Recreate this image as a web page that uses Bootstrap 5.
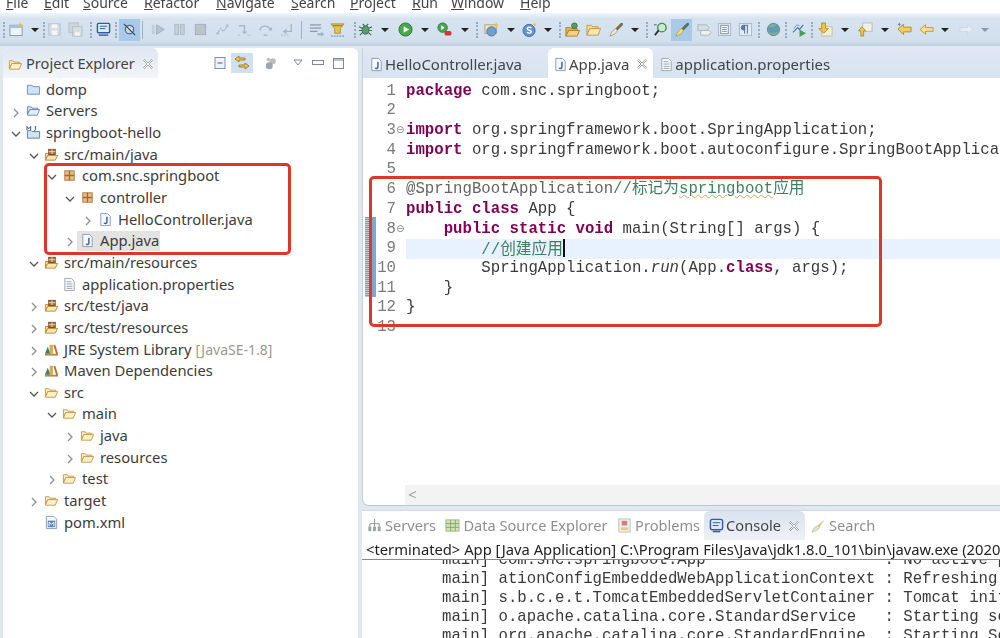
<!DOCTYPE html>
<html lang="en">
<head>
<meta charset="UTF-8">
<title>Eclipse</title>
<link href="https://cdn.jsdelivr.net/npm/bootstrap@5.3.0/dist/css/bootstrap.min.css" rel="stylesheet">
<style>
html, body { height: 638px; width: 1000px; overflow: hidden; }
body { background: #dfe7f1; font-family: "Noto Sans", "Noto Sans CJK SC", sans-serif; color: #333; position: relative; filter: blur(.35px); }
.menu-strip { height: 13px; background: #fff; overflow: hidden; font-size: 14px; line-height: 20px; color: #444; }
.menu-strip span { position: absolute; top: -7px; }
.menu-strip u { text-decoration-thickness: 1px; }
.tool-strip { height: 33px; background: linear-gradient(#f1f5f9 0, #d7e3f0 18%, #d2dfed 85%, #bfcfe1 100%); }
.tool-item { flex: none; height: 22px; display: flex; align-items: center; justify-content: center; }
.tool-on { background: #a9c9ea; }
.tool-sep { flex: none; width: 1px; height: 18px; background: #9fb2c8; }
.tool-drag { flex: none; width: 2px; height: 16px; border-left: 2px dotted #9aaabc; }
.drop-mark { flex: none; width: 0; height: 0; border-left: 4px solid transparent; border-right: 4px solid transparent; border-top: 4px solid #222; }
.drop-mark.off { border-top-color: #8b98a8; }
.work-area { height: 592px; padding-left: 3px; padding-top: 2px; }
.left-pane { width: 355px; background: #fff; border-radius: 6px 6px 0 0; }
.right-col { width: 638px; margin-left: 4px; }
.pane-head { height: 30px; }
.explorer-tab { width: 155px; height: 30px; padding: 2px 0 0 5px; background: linear-gradient(#dfe6f0, #f3f6fa); border-radius: 6px 6px 0 0; font-size: 14.6px; color: #444; }
.explorer-tab > svg:first-child { margin-right: 3px; }
.close-x { flex: none; margin-left: 8px; }
.head-tools { flex-grow: 1; }
.head-on { width: 22px; height: 20px; background: #cfe0f2; margin-left: 4px; }
.tree-list { padding-top: .5px; }
.tree-row { height: 21.65px; font-size: 14.75px; line-height: 21px; color: #3c3c3c; white-space: nowrap; }
.tree-row .chev { flex: none; width: 16px; }
.tree-row .node { flex: none; margin-right: 5px; }
.tree-body { align-items: center; height: 20px; }
.tree-sel { background: #e3e3e3; margin-left: -3px; padding-left: 3px; padding-right: 1px; }
.tree-dim { color: #9a9a8c; font-size: 14px; margin-left: 4px; }
.editor-pane { height: 458px; background: #fff; border-bottom: 1px solid #b9c6d6; border-left: 1px solid #c5d0de; border-radius: 0 0 0 7px; position: relative; }
.editor-tabs { height: 30px; background: linear-gradient(#dfe8f3, #d7e3f0); font-size: 15px; color: #444; }
.edit-tab { height: 30px; padding: 2px 0 0 6px; white-space: nowrap; }
.edit-tab svg:first-child { margin-right: 1px; }
.edit-tab.active { background: #fff; border-radius: 6px 6px 0 0; padding: 2px 6px 0 5px; margin-left: 26px; }
.edit-tab.active + .edit-tab { padding-left: 6px; }
.code-wrap { height: 407px; overflow: hidden; position: relative; padding-top: 3.5px; }
.code-line { height: 19.72px; line-height: 19.72px; font-family: "Liberation Mono", "Noto Sans CJK SC", monospace; font-size: 15.7px; white-space: pre; color: #3a3a3a; }
.line-no { flex: none; width: 33px; text-align: right; color: #7b7b7b; }
.fold-slot { flex: none; width: 10px; font-size: 10px; color: #7d8a9a; line-height: 17px; font-family: "DejaVu Sans", sans-serif; }
.line-text { flex-grow: 1; }
.line-cur { background: #e8f2fe; }
.kw { color: #7f0055; font-weight: bold; }
.cm { color: #3f7f5f; }
.an { color: #646464; }
.cjk { font-family: "Noto Sans CJK SC", sans-serif; font-size: 15.7px; line-height: 0; }
.spell { text-decoration: underline wavy #e0a03c 1px; }
.caret-bar { display: inline-block; width: 2px; height: 18px; background: #111; vertical-align: -3px; }
.change-bar { position: absolute; left: 2px; top: 139px; width: 11px; height: 80px; background: repeating-linear-gradient(#8e99a6 0 1px, #c3cad2 1px 2px); border-right: 5px solid #7ea8d2; }
.h-scroll { height: 20px; margin-left: 42px; background: #f3f3f3; color: #9aa0a6; font-size: 15px; line-height: 18px; padding-left: 3px; }
.console-pane { height: 128px; margin-top: 4px; background: #fff; border-top: 1px solid #d0d9e5; }
.console-tabs { height: 29px; font-size: 14.6px; color: #8f8f8f; white-space: nowrap; }
.ctab { height: 29px; padding-left: 9.5px; }
.ctab svg:first-child { margin-right: 3px; }
.ctab:first-child, .ctab.active { padding-left: 5px; }
.ctab.active + .ctab { padding-left: 6px; }
.ctab.active { background: linear-gradient(#d9e2ee, #eef2f7); border-radius: 6px 6px 0 0; color: #444; width: 101px; margin-left: 4px; }
.ctab.active svg:first-child { margin-right: 2px; }
.term-line { height: 20px; font-size: 14.75px; line-height: 19px; color: #222; white-space: nowrap; border-bottom: 1px solid #8a8a8a; padding-left: 4px; overflow: hidden; }
.console-body { height: 78px; overflow: hidden; }
.console-text { margin: -9px 0 0 80px; font-family: "Liberation Mono", monospace; font-size: 15.7px; line-height: 18.9px; color: #3a3a3a; overflow: visible; white-space: pre; }
.red-frame { position: absolute; border: 3px solid #e0352b; border-radius: 5px; pointer-events: none; }
.red-tree { left: 44px; top: 163px; width: 247px; height: 92px; }
.red-code { left: 369px; top: 176px; width: 513px; height: 151px; }
</style>
</head>
<body>

<svg width="0" height="0" class="position-absolute">
  <defs>
    <symbol id="x-close" viewBox="0 0 10 10"><path d="M1.500.5L5 4l3.500-3.500 1 1L6 5l3.500 3.500-1 1L5 6 1.500 9.500l-1-1L4 5 .5 1.500z" fill="#fff" stroke="#8d8d8d" stroke-width=".8"/></symbol>
    <symbol id="i-folder" viewBox="0 0 16 16"><path d="M1.500 4h4l1 1.500h6V7H4L1.500 12.500z" fill="#fbeec3" stroke="#c69a4c"/><path d="M4 7h10.500L12 13H1.500z" fill="#fdf1c9" stroke="#c69a4c"/></symbol>
    <symbol id="i-srcfolder" viewBox="0 0 16 16"><path d="M1.500 7h3l1 1h6v1H4l-2.500 5z" fill="#f6dc97" stroke="#b98c3d"/><path d="M4 9h10.500L12 14H1.500z" fill="#fbe7ae" stroke="#b98c3d"/><rect x="5" y="2.500" width="7" height="5.500" fill="#a9703a" stroke="#7b4d22"/><path d="M8.500 2.500v5M5 5h7" stroke="#f0d9b5"/></symbol>
    <symbol id="i-pkg" viewBox="0 0 16 16"><rect x="3" y="3" width="10" height="10" fill="#e8bd8c" stroke="#b0763c"/><path d="M8 3v10M3 8h10" stroke="#a5682f" stroke-width="1.400"/></symbol>
    <symbol id="i-java" viewBox="0 0 16 16"><path d="M3 1.500h7l3 3v10H3z" fill="#f7f9fc" stroke="#8b9bb0"/><path d="M9.500 5v6c0 1.500-2.500 1.500-3 .5" fill="none" stroke="#2f5f9e" stroke-width="1.500"/></symbol>
    <symbol id="i-page" viewBox="0 0 16 16"><path d="M3 1.500h7l3 3v10H3z" fill="#f6f7f9" stroke="#9aa5b3"/><path d="M5 5h5M5 7.500h6M5 10h6M5 12.200h6" stroke="#9aa5b3"/></symbol>
    <symbol id="i-lib" viewBox="0 0 16 16"><path d="M1 13.500h14" stroke="#b08a4a" stroke-width="2"/><path d="M1 12.500L4 5l3 7.500z" fill="#3f7f6f"/><rect x="6" y="3" width="3.500" height="9.500" fill="#d2aa52"/><path d="M10 3.500l2-.5 3 9.500-2 .5z" fill="#c26a3a"/></symbol>
    <symbol id="i-pom" viewBox="0 0 16 16"><path d="M2.500 1.500h8l3 3v10h-11z" fill="#f4f6fa" stroke="#8b9bb0"/><rect x="4" y="6" width="8" height="7" fill="#5c86b8"/><path d="M5.500 12V7.500L8 10l2.500-2.500V12" fill="none" stroke="#fff"/></symbol>
    <symbol id="i-blue" viewBox="0 0 16 16"><path d="M1.500 3.500h5l1 1.500h7v8h-13z" fill="#cfe3f7" stroke="#6a8fb8"/></symbol>
    <symbol id="i-servers" viewBox="0 0 16 16"><path d="M1.500 4h4l1 1.500h6V7H4L1.500 12z" fill="#cfe0f0" stroke="#6f8ba8"/><path d="M4 7h10.500L12 13H1.500z" fill="#e6eef6" stroke="#6f8ba8"/></symbol>
    <symbol id="i-project" viewBox="0 0 16 16"><path d="M1.500 6h4l1 1h8v7h-13z" fill="#d2e2f2" stroke="#5f7f9f"/><path d="M1 5.500V1.500l2 2.500 2-2.500v4" fill="none" stroke="#33506e"/><path d="M10 1v4c0 1-1 1-1.500 .5" fill="none" stroke="#33506e"/></symbol>
    <symbol id="t-new" viewBox="0 0 16 16"><rect x="1" y="3.500" width="13" height="11" fill="#eef3f8" stroke="#7e95ad"/><rect x="1" y="3.500" width="13" height="3" fill="#a9c3dd"/><path d="M12 .5l1 2 2 1-2 1-1 2-1-2-2-1 2-1z" fill="#e6c13f"/></symbol>
    <symbol id="t-save" viewBox="0 0 16 16"><rect x="2" y="2" width="12" height="12" fill="#d7dde4" stroke="#b4bec9"/><rect x="5" y="2.500" width="6" height="4" fill="#f4f6f8"/><rect x="5" y="9" width="6" height="5" fill="#f4f6f8"/></symbol>
    <symbol id="t-saveall" viewBox="0 0 16 16"><rect x="1" y="1" width="10" height="10" fill="#cfd6de" stroke="#b4bec9"/><rect x="5" y="5" width="10" height="10" fill="#d7dde4" stroke="#b4bec9"/><rect x="7.500" y="11" width="5" height="3.500" fill="#f4f6f8"/></symbol>
    <symbol id="t-mon" viewBox="0 0 16 16"><rect x="1.500" y="1.500" width="13" height="10" rx="1" fill="#dfeaf6" stroke="#2f5f9e" stroke-width="1.500"/><path d="M4 4.500h8M4 7h6" stroke="#2f5f9e"/><path d="M3 14h10" stroke="#2f5f9e" stroke-width="1.500"/></symbol>
    <symbol id="t-skip" viewBox="0 0 16 16"><circle cx="8" cy="8" r="4.500" fill="#cdd9e6" stroke="#3f6f9f" stroke-width="1.300"/><path d="M2 2l12 12" stroke="#444" stroke-width="1.300"/></symbol>
    <symbol id="t-resume" viewBox="0 0 16 16"><rect x="1" y="3" width="3" height="10" fill="#c4ccd6"/><path d="M6 3l8 5-8 5z" fill="#b6c4d2" stroke="#9dadbe"/></symbol>
    <symbol id="t-pause" viewBox="0 0 16 16"><rect x="3" y="2.500" width="4" height="11" fill="#c6cfd9" stroke="#aeb9c5"/><rect x="9" y="2.500" width="4" height="11" fill="#c6cfd9" stroke="#aeb9c5"/></symbol>
    <symbol id="t-stop" viewBox="0 0 16 16"><rect x="2.500" y="2.500" width="11" height="11" fill="#bcc3cb" stroke="#a4adb7"/></symbol>
    <symbol id="t-disc" viewBox="0 0 16 16"><path d="M2 13l4-6 3 3 5-7" fill="none" stroke="#a9b5c2" stroke-width="1.300" stroke-dasharray="2 1"/><circle cx="3" cy="12" r="1.500" fill="#b6c0cc"/><circle cx="13" cy="4" r="1.500" fill="#b6c0cc"/></symbol>
    <symbol id="t-into" viewBox="0 0 16 16"><path d="M2 4h6v6" fill="none" stroke="#aab6c3" stroke-width="1.500"/><path d="M5 10h6l-3 3z" fill="#aab6c3"/><path d="M1 14h3M11 14h4" stroke="#aab6c3" stroke-dasharray="2 1"/></symbol>
    <symbol id="t-over" viewBox="0 0 16 16"><path d="M2 9c1-6 9-6 11-1" fill="none" stroke="#aab6c3" stroke-width="1.500"/><path d="M11 9h4V5z" fill="#aab6c3"/><path d="M6 14h4" stroke="#aab6c3" stroke-width="1.500"/></symbol>
    <symbol id="t-ret" viewBox="0 0 16 16"><path d="M12 2v8H6" fill="none" stroke="#aab6c3" stroke-width="1.500"/><path d="M7 7l-4 3 4 3z" fill="#aab6c3"/><path d="M1 14h8" stroke="#aab6c3" stroke-dasharray="2 1"/></symbol>
    <symbol id="t-filter" viewBox="0 0 16 16"><path d="M1 3h12M1 6.500h12M1 10h8" stroke="#8e9aa8" stroke-width="1.300"/><path d="M9 12h4V10l3 3-3 3v-2H9z" fill="#9fb1c4"/></symbol>
    <symbol id="t-drop" viewBox="0 0 16 16"><path d="M1 2h14l-4 5v5H5V7z" fill="#e8c24e" stroke="#b68f2c"/><path d="M3 4h10" stroke="#5b7f3e"/><path d="M1 15h14" stroke="#5f86ad" stroke-dasharray="2 1"/></symbol>
    <symbol id="t-debug" viewBox="0 0 16 16"><ellipse cx="8" cy="8.500" rx="3.500" ry="4.500" fill="#5d9a6d" stroke="#3c6f4c"/><path d="M1 5l4 2M15 5l-4 2M1 9h3.500M15 9h-3.500M2 14l3-3M14 14l-3-3M5 2l2 2M11 2L9 4" stroke="#3c6f4c" stroke-width="1.200"/></symbol>
    <symbol id="t-run" viewBox="0 0 16 16"><circle cx="8" cy="8" r="7" fill="#4aa54e" stroke="#2d7a36"/><path d="M6 4.500l6 3.500-6 3.500z" fill="#f1f7ef"/></symbol>
    <symbol id="t-ext" viewBox="0 0 16 16"><circle cx="6" cy="6" r="5" fill="#4aa54e" stroke="#2d7a36"/><path d="M4.500 3.500l3.500 2.500-3.500 2.500z" fill="#fff"/><rect x="8" y="9.500" width="7.500" height="5" rx="2" fill="#d8323a"/></symbol>
    <symbol id="t-newj" viewBox="0 0 16 16"><rect x="1" y="3" width="12" height="9" fill="#f3e6c0" stroke="#b3a06a"/><circle cx="8" cy="10" r="5" fill="#6f9fcf" stroke="#4d7ba8"/><path d="M13 .5l1 1.500 1.500 1-1.500 1-1 1.500-1-1.500-1.500-1 1.500-1z" fill="#e6c13f"/></symbol>
    <symbol id="t-s" viewBox="0 0 16 16"><circle cx="7.500" cy="9" r="6.500" fill="#5f93cd" stroke="#3e70a8"/><path d="M10 6.500c-1-1.500-4.500-1.200-4.500.7 0 2 4.500 1.300 4.500 3.300 0 1.800-3.700 1.800-4.800.3" fill="none" stroke="#fff" stroke-width="1.500"/><path d="M13.500 .5l.7 1.500 1.500.7-1.500.7-.7 1.500-.7-1.500-1.500-.7 1.500-.7z" fill="#e6c13f"/></symbol>
    <symbol id="t-openp" viewBox="0 0 16 16"><path d="M1 6h5l1 1h6v2H4l-3 6z" fill="#e8b64f" stroke="#a97f2b"/><path d="M4 9h11.500L13 15H1z" fill="#f3d27d" stroke="#a97f2b"/><circle cx="10" cy="4" r="3" fill="#5f9a5f" stroke="#3f6f3f"/></symbol>
    <symbol id="t-open" viewBox="0 0 16 16"><path d="M1 3.500h5l1 1.500h6v2H4l-3 7z" fill="#f4dc9d" stroke="#c29a48"/><path d="M4 7h11.500L13 14H1z" fill="#f9e6b2" stroke="#c29a48"/></symbol>
    <symbol id="t-brush" viewBox="0 0 16 16"><path d="M14.500 1l-6 6 1.500 1.500 6-6z" fill="#8a6d3b" stroke="#6b5229"/><path d="M8 7l2 2c-1 3-4 5-8 6 1-3 3-6 6-8z" fill="#efe7d2" stroke="#a8a086"/></symbol>
    <symbol id="t-search" viewBox="0 0 16 16"><circle cx="9.500" cy="6" r="4.500" fill="#cfe8cf" stroke="#3f8f4f" stroke-width="1.500"/><path d="M6 9l-4 5" stroke="#333" stroke-width="2"/><path d="M1 3h3" stroke="#555"/></symbol>
    <symbol id="t-brushon" viewBox="0 0 16 16"><path d="M14.500 1l-6 6 1.500 1.500 6-6z" fill="#5f6f55" stroke="#4f5f45"/><path d="M8 7l2 2c-1 3-4 5-8 6 1-3 3-6 6-8z" fill="#f0dc7c" stroke="#c0a83c"/></symbol>
    <symbol id="t-mark" viewBox="0 0 16 16"><path d="M1 3h9l3 3-3 3H1z" fill="#d7dee6" stroke="#a9b4c0"/><path d="M4 9h9l2 2-2 3H4z" fill="#eef1f4" stroke="#a9b4c0"/></symbol>
    <symbol id="t-block" viewBox="0 0 16 16"><rect x="1.500" y="1.500" width="13" height="13" fill="#e4eaf1" stroke="#a9b8c8"/><rect x="4" y="3.500" width="8" height="9" fill="#fbfcfd" stroke="#7f8fa0"/><path d="M5.500 6h5M5.500 8h5M5.500 10h5" stroke="#7f8fa0"/></symbol>
    <symbol id="t-para" viewBox="0 0 16 16"><rect x="1.500" y="1.500" width="13" height="13" fill="#e4eaf1" stroke="#a9b8c8"/><path d="M7 3.500H6a2.500 2.500 0 000 5h1zM7 3.500v9M10 3.500v9M7 3.500h4" fill="#5f7f9f" stroke="#4f6f8f"/></symbol>
    <symbol id="t-globe" viewBox="0 0 16 16"><circle cx="8" cy="8" r="6.500" fill="#86b08a" stroke="#5b7f92"/><path d="M2 6c3-2 5 1 7-1s2-3 2-3c3 2 3 6 2 8-3 2-8 2-10 0z" fill="#5f9ab8"/></symbol>
    <symbol id="t-sync" viewBox="0 0 16 16"><path d="M1 11l5-5 2 2 4-5" fill="none" stroke="#5279a8" stroke-width="1.300"/><path d="M8 8l7 4-7 4z" fill="#45a050"/><path d="M2 7l3-4 3 1" fill="none" stroke="#7a9ac0"/></symbol>
    <symbol id="t-down" viewBox="0 0 16 16"><rect x="4" y="5" width="11" height="10" fill="#f3eedb" stroke="#c4bda0"/><path d="M4 1h4v6h3l-5 5-5-5h3z" fill="#f0c64a" stroke="#b88f22"/></symbol>
    <symbol id="t-up" viewBox="0 0 16 16"><rect x="5" y="1" width="10" height="9" fill="#eef0e6" stroke="#c4bda0"/><path d="M4 5L.5 9.500H3V15h3V9.500h2.500z" fill="#f0c64a" stroke="#b88f22"/></symbol>
    <symbol id="t-backs" viewBox="0 0 16 16"><path d="M1 7.500l6-5v3h8v5H7v3z" fill="#f2cf62" stroke="#b88f22"/><path d="M2.500 .5l.7 1.300 1.300.7-1.300.7-.7 1.300-.7-1.300-1.300-.7 1.300-.7z" fill="#5f86ad"/></symbol>
    <symbol id="t-back" viewBox="0 0 16 16"><path d="M1 8l6-5v3h8v4H7v3z" fill="#f7dd92" stroke="#c09a3a"/></symbol>
    <symbol id="t-fwd" viewBox="0 0 16 16"><path d="M15 8l-6-5v3H1v4h8v3z" fill="#e6edf5" stroke="#ccd6e2"/></symbol>
    <symbol id="h-collapse" viewBox="0 0 14 14"><rect x="2" y="1.500" width="10" height="11" fill="#eef3f8" stroke="#7e95ad"/><path d="M4.500 7h5" stroke="#556"/></symbol>
    <symbol id="h-link" viewBox="0 0 16 16"><path d="M1 4l4-3v2h6v2H5v2zM15 11l-4-3v2H5v2h6v2z" fill="#eec651" stroke="#a5822a"/></symbol>
    <symbol id="h-sync" viewBox="0 0 16 16"><circle cx="10" cy="6" r="3.500" fill="#b9bec5"/><circle cx="6" cy="11" r="4" fill="#9ea5ad"/><circle cx="5" cy="4" r="2" fill="#b9bec5"/></symbol>
    <symbol id="c-srv" viewBox="0 0 16 16"><path d="M8 1v5M3 6h10M3 6v3M13 6v3M8 6v3" stroke="#7f9a8a" fill="none"/><rect x="1.500" y="9" width="3" height="5" fill="#94a69a"/><rect x="6.500" y="9" width="3" height="5" fill="#94a69a"/><rect x="11.500" y="9" width="3" height="5" fill="#94a69a"/></symbol>
    <symbol id="c-ds" viewBox="0 0 16 16"><rect x="1" y="2" width="14" height="12" fill="#cfe3b8" stroke="#a3b982"/><path d="M1 6h14M1 10h14M6 2v12M11 2v12" stroke="#8aa36a"/></symbol>
    <symbol id="c-prob" viewBox="0 0 16 16"><rect x="2" y="1" width="12" height="14" fill="#eef0f2" stroke="#b8bec6"/><rect x="5" y="3" width="6" height="5" fill="#e27c72"/><rect x="4" y="10" width="8" height="3" fill="#e8cd7e"/></symbol>
    <symbol id="c-con" viewBox="0 0 16 16"><rect x="1.500" y="1.500" width="13" height="11" rx="2" fill="#dce8f5" stroke="#2f5f9e" stroke-width="1.500"/><path d="M4 5h8M4 8h6" stroke="#2f5f9e"/><path d="M4 14.500h8" stroke="#2f5f9e" stroke-width="1.500"/></symbol>
    <symbol id="c-srch" viewBox="0 0 16 16"><path d="M15 1l-8 7 2 2z" fill="#dcc98a"/><path d="M7 8l2 2c-1 3-4 4-8 5 1-3 3-6 6-7z" fill="#dfe6cf" stroke="#c2cba8"/></symbol>
  </defs>
</svg>

<div class="menu-strip" id="menuStrip"></div>
<div class="tool-strip d-flex align-items-center" id="toolStrip"></div>

<div class="work-area d-flex">
  <div class="left-pane overflow-hidden">
    <div class="pane-head d-flex">
      <div class="explorer-tab d-flex align-items-center">
        <svg width="15" height="15"><use href="#i-folder"/></svg>Project Explorer<svg class="close-x" width="10" height="10"><use href="#x-close"/></svg>
      </div>
      <div class="head-tools d-flex align-items-center" id="headTools"></div>
    </div>
    <div class="tree-list" id="treeList"></div>
  </div>

  <div class="right-col d-flex flex-column">
    <div class="editor-pane">
      <div class="editor-tabs d-flex align-items-stretch">
        <div class="edit-tab d-flex align-items-center"><svg width="15" height="15"><use href="#i-java"/></svg>HelloController.java</div>
        <div class="edit-tab active d-flex align-items-center"><svg width="15" height="15"><use href="#i-java"/></svg>App.java<svg class="close-x" width="10" height="10"><use href="#x-close"/></svg></div>
        <div class="edit-tab d-flex align-items-center"><svg width="15" height="15"><use href="#i-page"/></svg>application.properties</div>
      </div>
      <div class="code-wrap" id="codeWrap">
        <div class="change-bar"></div>
      </div>
      <div class="h-scroll">&lt;</div>
    </div>
    <div class="console-pane">
      <div class="console-tabs d-flex align-items-center">
        <div class="ctab d-flex align-items-center"><svg width="15" height="15"><use href="#c-srv"/></svg>Servers</div>
        <div class="ctab d-flex align-items-center"><svg width="15" height="15"><use href="#c-ds"/></svg>Data Source Explorer</div>
        <div class="ctab d-flex align-items-center"><svg width="15" height="15"><use href="#c-prob"/></svg>Problems</div>
        <div class="ctab active d-flex align-items-center"><svg width="15" height="15"><use href="#c-con"/></svg>Console<svg class="close-x" width="10" height="10"><use href="#x-close"/></svg></div>
        <div class="ctab d-flex align-items-center"><svg width="15" height="15"><use href="#c-srch"/></svg>Search</div>
      </div>
      <div class="term-line">&lt;terminated&gt; App [Java Application] C:\Program Files\Java\jdk1.8.0_101\bin\javaw.exe (2020</div>
      <div class="console-body"><pre class="console-text">main] com.snc.springboot.App                   : No active profile set
main] ationConfigEmbeddedWebApplicationContext : Refreshing
main] s.b.c.e.t.TomcatEmbeddedServletContainer : Tomcat initialized
main] o.apache.catalina.core.StandardService   : Starting service
main] org.apache.catalina.core.StandardEngine  : Starting Servlet</pre></div>
    </div>
  </div>
</div>

<div class="red-frame red-tree"></div>
<div class="red-frame red-code"></div>

<script>
  // menu: clipped at the top of the shot
  const menus = [['F','ile',6],['E','dit',44],['S','ource',83],['R','efactor',144],['N','avigate',216],['S','earch',291],['P','roject',350],['R','un',412],['W','indow',451],['H','elp',520]];
  const menuStrip = document.getElementById('menuStrip');
  menus.forEach(m => {
    let s = document.createElement('span');
    s.innerHTML = '<u>' + m[0] + '</u>' + m[1];
    s.style.left = m[2] + 'px';
    menuStrip.appendChild(s);
  });

  // toolbar: [kind, x, width]
  const tools = [
    ['drag',3],['t-new',9],['v',31],['drag',43],['t-save',47],['t-saveall',68],['drag',90],['t-mon',96],['drag',115],['on:t-skip',119,21],['sep',142],
    ['t-resume',151],['t-pause',172],['t-stop',193],['t-disc',215],['t-into',237],['t-over',258],['t-ret',280],['sep',301],
    ['t-filter',309],['t-drop',330],['drag',354],['t-debug',358],['v',381],['t-run',398],['v',421],['t-ext',437],['v',461],['drag',476],
    ['t-newj',484],['v',507],['t-s',522],['v',544],['drag',559],['t-openp',565],['t-open',586],['t-brush',608],['v',631],['drag',646],
    ['t-search',653],['on:t-brushon',671,21],['t-mark',697],['t-block',717],['t-para',738],['drag',758],['t-globe',766],['drag',785],
    ['t-sync',792],['drag',811],['t-down',818],['v',841],['t-up',858],['v',881],['t-backs',897],['t-back',919],['v',941],['t-fwd',959],['x',981]
  ];
  const toolStrip = document.getElementById('toolStrip');
  let cur = 0;
  tools.forEach(t => {
    let el = document.createElement('div');
    let w = 15;
    if (t[0] == 'drag') { el.className = 'tool-drag'; w = 2; }
    else if (t[0] == 'sep') { el.className = 'tool-sep'; w = 1; }
    else if (t[0] == 'v' || t[0] == 'x') { el.className = 'drop-mark' + (t[0] == 'x' ? ' off' : ''); w = 8; }
    else {
      let on = t[0].startsWith('on:');
      let id = on ? t[0].slice(3) : t[0];
      w = t[2] || 15;
      el.className = 'tool-item' + (on ? ' tool-on' : '');
      el.style.width = w + 'px';
      el.innerHTML = '<svg width="15" height="15"><use href="#' + id + '"/></svg>';
    }
    el.style.marginLeft = (t[1] - cur) + 'px';
    cur = t[1] + w;
    toolStrip.appendChild(el);
  });

  const head = document.getElementById('headTools');
  head.innerHTML = `
    <svg width="14" height="14" class="ms-auto"><use href="#h-collapse"/></svg>
    <div class="head-on d-flex align-items-center justify-content-center"><svg width="16" height="16"><use href="#h-link"/></svg></div>
    <svg width="14" height="14" style="margin-left:11px"><use href="#h-sync"/></svg>
    <svg width="10" height="8" style="margin-left:15px"><path d="M1 1h8L5 6z" fill="#fff" stroke="#7d8a99"/></svg>
    <svg width="12" height="6" style="margin-left:9px"><rect x="0.500" y="0.500" width="11" height="4" fill="#fff" stroke="#7d8a99"/></svg>
    <svg width="11" height="11" style="margin-left:9px;margin-right:14px"><rect x="0.500" y="0.500" width="10" height="10" fill="#fff" stroke="#7d8a99"/><path d="M0 2h11" stroke="#7d8a99"/></svg>`;

  // [level, chevron, icon, label, decoration]
  const tree = [
    [0,'','i-blue','domp'],
    [0,'r','i-servers','Servers'],
    [0,'d','i-project','springboot-hello'],
    [1,'d','i-srcfolder','src/main/java'],
    [2,'d','i-pkg','com.snc.springboot'],
    [3,'d','i-pkg','controller'],
    [4,'r','i-java','HelloController.java'],
    [3,'r','i-java','App.java','sel'],
    [1,'d','i-srcfolder','src/main/resources'],
    [2,'','i-page','application.properties'],
    [1,'r','i-srcfolder','src/test/java'],
    [1,'r','i-srcfolder','src/test/resources'],
    [1,'r','i-lib','JRE System Library','[JavaSE-1.8]'],
    [1,'r','i-lib','Maven Dependencies'],
    [1,'d','i-folder','src'],
    [2,'d','i-folder','main'],
    [3,'r','i-folder','java'],
    [3,'r','i-folder','resources'],
    [2,'r','i-folder','test'],
    [1,'r','i-folder','target'],
    [1,'','i-pom','pom.xml']
  ];
  const chevs = {
    r: '<svg width="12" height="12"><path d="M4 2l4 4-4 4" fill="none" stroke="#8f8f8f" stroke-width="1.300"/></svg>',
    d: '<svg width="12" height="12"><path d="M2 4l4 4 4-4" fill="none" stroke="#555" stroke-width="1.300"/></svg>',
    '': ''
  };
  const treeList = document.getElementById('treeList');
  tree.forEach(n => {
    let row = document.createElement('div');
    row.className = 'tree-row d-flex align-items-center';
    row.style.paddingLeft = (7 + n[0] * 18) + 'px';
    let label = n[3];
    if (n[4] && n[4] != 'sel') label += '<span class="tree-dim">' + n[4] + '</span>';
    row.innerHTML = '<span class="chev">' + chevs[n[1]] + '</span><span class="tree-body d-flex' + (n[4] == 'sel' ? ' tree-sel' : '') + '"><svg class="node" width="15" height="15"><use href="#' + n[2] + '"/></svg><span>' + label + '</span></span>';
    treeList.appendChild(row);
  });

  const code = [
    ['1','','<span class="kw">package</span> com.snc.springboot;'],
    ['2','',''],
    ['3','&#8854;','<span class="kw">import</span> org.springframework.boot.SpringApplication;'],
    ['4','','<span class="kw">import</span> org.springframework.boot.autoconfigure.SpringBootApplication;'],
    ['5','',''],
    ['6','','<span class="an">@SpringBootApplication</span><span class="cm">//<span class="cjk">标记为</span><span class="spell">springboot</span><span class="cjk">应用</span></span>'],
    ['7','','<span class="kw">public</span> <span class="kw">class</span> App {'],
    ['8','&#8854;','    <span class="kw">public</span> <span class="kw">static</span> <span class="kw">void</span> main(String[] args) {'],
    ['9','','        <span class="cm">//<span class="cjk">创建应用</span></span><span class="caret-bar"></span>'],
    ['10','','        SpringApplication.<i>run</i>(App.<span class="kw">class</span>, args);'],
    ['11','','    }'],
    ['12','','}'],
    ['13','','']
  ];
  const codeWrap = document.getElementById('codeWrap');
  code.forEach(l => {
    let row = document.createElement('div');
    row.className = 'code-line d-flex';
    row.innerHTML = '<span class="line-no">' + l[0] + '</span><span class="fold-slot">' + l[1] + '</span><span class="line-text' + (l[0] == '9' ? ' line-cur' : '') + '">' + l[2] + '</span>';
    codeWrap.appendChild(row);
  });
</script>
<script src="https://cdn.jsdelivr.net/npm/bootstrap@5.3.0/dist/js/bootstrap.bundle.min.js"></script>
</body>
</html>
